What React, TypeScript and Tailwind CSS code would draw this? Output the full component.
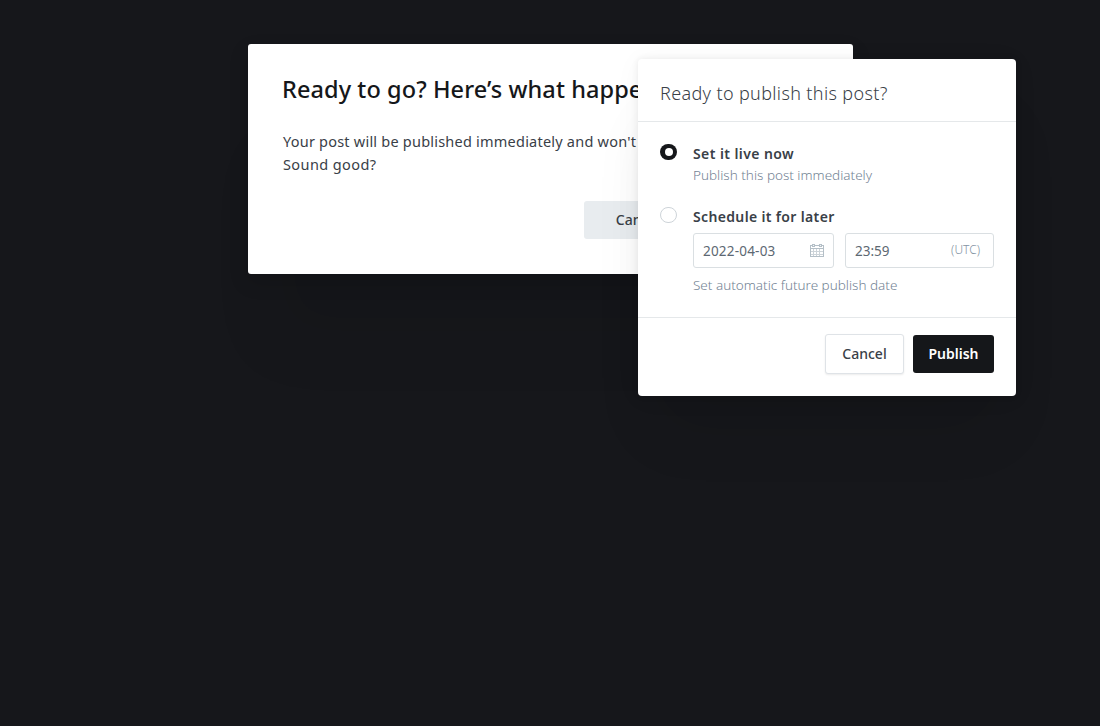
import React from "react";

function CalendarIcon() {
  return (
    <svg width="16" height="16" viewBox="0 0 16 16" fill="none" shapeRendering="crispEdges">
      <path d="M1.5 2.5h13v11h-13z" stroke="#b4bfc7" />
      <path d="M2 5.5h12" stroke="#b4bfc7" />
      <path d="M2 8.5h12M2 11.5h12M4.5 6v7M7.5 6v7M10.5 6v7" stroke="#cdd4d9" />
      <path d="M3 1h3v3h-3zM10 1h3v3h-3z" fill="#b4bfc7" />
      <path d="M4 2h1v1h-1zM11 2h1v1h-1z" fill="#f3f5f6" />
    </svg>
  );
}

function ConfirmDialog() {
  return (
    <section className="h-[230px] w-[605px] rounded-[3px] bg-white px-[34px] pt-[30px] shadow-[0_8px_20px_rgba(0,0,0,0.14),0_90px_60px_-20px_rgba(0,0,0,0.06)]">
      <h1 className="text-[23.5px] leading-[30px] font-medium tracking-[0.08px] whitespace-nowrap text-[#15171a]">
        Ready to go? Here’s what happe
      </h1>
      <div className="mt-[26px] pl-px leading-[23px] text-[#394047]">
        <p className="text-[14.5px] tracking-[0.22px] whitespace-nowrap">
          Your post will be published immediately and won't
        </p>
        <p className="text-[14.5px] tracking-[0.4px]">Sound good?</p>
      </div>
      <div className="mt-[25px] flex pl-[302px]">
        <button className="h-[38px] w-[108px] rounded-[3px] bg-[#e8ecef] pb-px text-[14px] font-medium text-[#394047]">
          Cancel
        </button>
      </div>
    </section>
  );
}

function PublishMenu() {
  return (
    <section className="absolute top-[59px] left-[638px] flex h-[337px] w-[378px] flex-col rounded-[4px] bg-white shadow-[0_0_7px_rgba(0,0,0,0.08),0_2px_28px_rgba(0,0,0,0.04),0_50px_60px_-20px_rgba(0,0,0,0.1)]">
      <header className="h-[63px] border-b border-[#e5e8ea] px-[22px] pt-[21px]">
        <h2 className="text-[18px] leading-[26px] font-[350] tracking-[0.36px] whitespace-nowrap text-[#394047]">
          Ready to publish this post?
        </h2>
      </header>
      <div className="h-[196px] border-b border-[#e5e8ea] px-[22px] pt-[21px]">
        <div className="flex">
          <span className="mt-px flex h-[16px] w-[17px] items-center justify-center rounded-full bg-[#15171a]">
            <span className="size-[8px] rounded-full bg-white" />
          </span>
          <div className="ml-4">
            <div className="text-[14px] leading-[22px] font-semibold tracking-[0.42px] whitespace-nowrap text-[#394047]">
              Set it live now
            </div>
            <div className="text-[13.5px] leading-[20px] font-light whitespace-nowrap text-[#738394]">
              Publish this post immediately
            </div>
          </div>
        </div>
        <div className="mt-[21px] flex">
          <span className="mt-px h-[16px] w-[17px] rounded-full border border-[#ced4d9]" />
          <div className="ml-4">
            <div className="text-[14px] leading-[22px] font-semibold tracking-[0.35px] whitespace-nowrap text-[#394047]">
              Schedule it for later
            </div>
            <div className="mt-[5px] flex gap-[11px]">
              <div className="flex h-[35px] w-[141px] items-center justify-between rounded-[3px] border border-[#dadfe2] pr-2 pl-[9px] text-[13.5px] text-[#5d6872]">
                <span className="pt-px tracking-[0.2px]">2022-04-03</span>
                <CalendarIcon />
              </div>
              <div className="flex h-[35px] w-[149px] items-center justify-between rounded-[3px] border border-[#dadfe2] pr-[13px] pl-[9px] text-[13.5px] text-[#5d6872]">
                <span className="pt-px">23:59</span>
                <span className="pb-px text-[12px] font-light text-[#8393a3]">(UTC)</span>
              </div>
            </div>
            <div className="mt-[7px] text-[13.5px] leading-[20px] font-light whitespace-nowrap text-[#738394]">
              Set automatic future publish date
            </div>
          </div>
        </div>
      </div>
      <footer className="flex justify-end gap-[9px] px-[22px] pt-4">
        <button className="h-[40px] w-[79px] rounded-[3px] border border-[#dfe3e7] bg-white pb-[2px] text-[14px] font-medium text-[#394047] shadow-[0_1px_2px_rgba(0,0,0,0.08)]">
          Cancel
        </button>
        <button className="mt-px h-[38px] w-[81px] rounded-[3px] bg-[#15171a] pb-[2px] text-[14px] font-semibold text-white">
          Publish
        </button>
      </footer>
    </section>
  );
}

export default function App() {
  return (
    <main className="relative h-[726px] w-[1100px] overflow-hidden bg-[#16171b] pt-[44px] pl-[248px] font-['Noto_Sans','Open_Sans',sans-serif]">
      <ConfirmDialog />
      <PublishMenu />
    </main>
  );
}
